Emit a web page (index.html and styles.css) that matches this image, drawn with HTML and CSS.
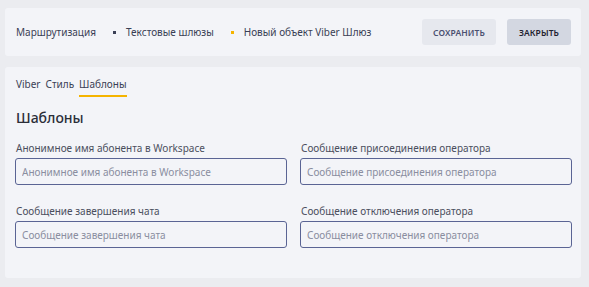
FILE: index.html
```html
<!DOCTYPE html>
<html lang="ru">
<head>
<meta charset="utf-8">
<link rel="stylesheet" href="styles.css">
</head>
<body>
<div class="page">
  <header class="card topbar">
    <nav class="crumbs">
      <span class="crumb">Маршрутизация</span>
      <span class="dot"></span>
      <span class="crumb">Текстовые шлюзы</span>
      <span class="dot dot-active"></span>
      <span class="crumb">Новый объект Viber Шлюз</span>
    </nav>
    <div class="actions">
      <button class="btn btn-save">СОХРАНИТЬ</button>
      <button class="btn btn-close">ЗАКРЫТЬ</button>
    </div>
  </header>
  <main class="card content">
    <div class="tabs">
      <span class="tab">Viber</span>
      <span class="tab">Стиль</span>
      <span class="tab tab-active">Шаблоны</span>
    </div>
    <h2 class="title">Шаблоны</h2>
    <div class="grid">
      <label class="field">
        <span class="label">Анонимное имя абонента в Workspace</span>
        <input class="input" placeholder="Анонимное имя абонента в Workspace">
      </label>
      <label class="field">
        <span class="label">Сообщение присоединения оператора</span>
        <input class="input" placeholder="Сообщение присоединения оператора">
      </label>
      <label class="field">
        <span class="label">Сообщение завершения чата</span>
        <input class="input" placeholder="Сообщение завершения чата">
      </label>
      <label class="field">
        <span class="label">Сообщение отключения оператора</span>
        <input class="input" placeholder="Сообщение отключения оператора">
      </label>
    </div>
  </main>
</div>
</body>
</html>
```
FILE: styles.css
```css
* { box-sizing: border-box; }
html, body { margin: 0; padding: 0; }
body {
  background: #ebecf0;
  font-family: "Noto Sans", "Open Sans", sans-serif;
  color: #2c2f3a;
  width: 589px;
  height: 287px;
  overflow: hidden;
}
.page {
  padding: 8px 8px 0 5px;
  display: flex;
  flex-direction: column;
  gap: 11px;
}
.card {
  background: #f3f4f8;
  border-radius: 3px;
}
.topbar {
  height: 48px;
  display: flex;
  align-items: center;
  justify-content: space-between;
  padding: 0 10px 0 11px;
}
.crumbs {
  display: flex;
  align-items: center;
  font-size: 10px;
  color: #3a3f55;
}
.dot {
  width: 3px;
  height: 3px;
  background: #3a3f55;
  margin: 0 10px 0 17px;
}
.dot-active { background: #f5b400; }
.actions { display: flex; gap: 11px; }
.btn {
  border: 0;
  border-radius: 3px;
  height: 26px;
  font-family: inherit;
  font-size: 8.5px;
  font-weight: 600;
  letter-spacing: 0.1px;
  padding: 0 8px;
}
.btn-save { background: #e6e8ee; color: #4b5070; width: 74px; }
.btn-close { background: #d3d7e1; color: #1e2130; width: 64px; }
.content {
  height: 211px;
  padding: 10px 10px 0 10px;
}
.tabs {
  display: flex;
  gap: 5px;
  font-size: 10px;
  color: #3a3f55;
  padding-left: 1px;
}
.tab { padding: 0 0 5px; }
.tab-active { border-bottom: 2px solid #f5b400; padding: 0 0 4px; }
.title {
  margin: 11px 0 0 1px;
  font-size: 14px;
  font-weight: 500;
  color: #2b2e38;
}
.grid {
  display: grid;
  grid-template-columns: 272px 272px;
  column-gap: 13px;
  row-gap: 19px;
  margin-top: 14px;
}
.field { display: flex; flex-direction: column; gap: 3px; }
.label { font-size: 10px; color: #4b4f5e; padding-left: 1px; }
.input {
  height: 27px;
  border: 1px solid #5a6494;
  border-radius: 3px;
  background: #f3f4f8;
  padding: 0 6px;
  font-family: inherit;
  font-size: 10px;
  color: #2c2f3a;
  outline: none;
}
.input::placeholder { color: #8a8ea0; }
```
